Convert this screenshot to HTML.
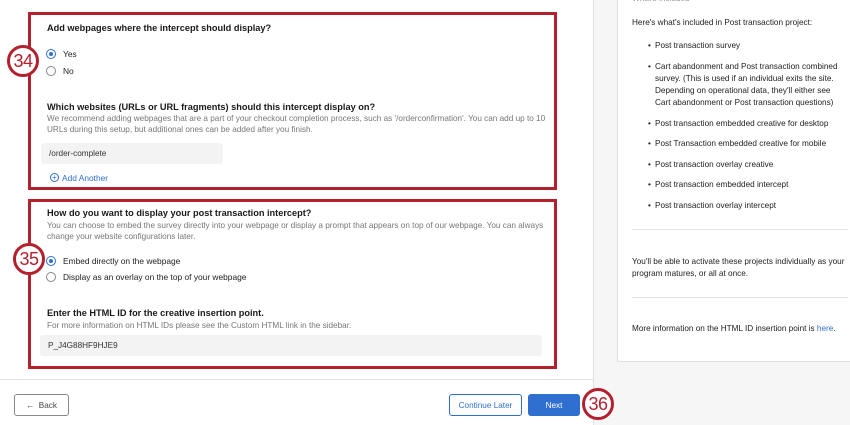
<!DOCTYPE html>
<html><head><style>
*{margin:0;padding:0;box-sizing:border-box}
body{width:850px;height:425px;overflow:hidden;background:#fff;font-family:"Liberation Sans",Arial,sans-serif;position:relative;color:#222}
.a{position:absolute;white-space:nowrap}
.h{font-size:9.2px;font-weight:bold;color:#1a1a1a}
.g{font-size:8.2px;color:#777}
.t{font-size:8.4px;color:#222}
.box{position:absolute;border:3px solid #b3212e}
.circ{position:absolute;width:32px;height:32px;border:3px solid #b3212e;border-radius:50%;background:#fff;color:#b3212e;font-size:18px;text-align:center;line-height:26px;letter-spacing:-0.5px}
.rad{position:absolute;width:10px;height:10px;border:1px solid #888;border-radius:50%;background:#fff}
.rad.on{border-color:#2f6fcf}
.rad.on:after{content:"";position:absolute;left:2px;top:2px;width:4px;height:4px;border-radius:50%;background:#2f6fcf}
.inp{position:absolute;background:#f3f3f3;border-radius:3px;font-size:8.2px;color:#333;padding-left:8px;line-height:21px}
.side{font-size:8.2px;color:#222}
.b{position:absolute;left:655px;font-size:8.2px;color:#222;line-height:12px;white-space:nowrap}
.b:before{content:"•";position:absolute;left:-7px}
.btn{position:absolute;height:22px;border-radius:3px;font-size:8.2px;display:flex;align-items:center;justify-content:center}
</style></head><body>
<div class="a" style="left:593px;top:0;width:257px;height:425px;background:#f6f6f6;border-left:1px solid #e2e2e2"></div>
<div class="a" style="left:617px;top:-5px;width:240px;height:367px;background:#fff;border:1px solid #e0e0e0"></div>
<div class="a side" style="left:632px;top:-6px;color:#999">What's included</div>
<div class="a side" style="left:632px;top:18px">Here's what's included in Post transaction project:</div>
<div class="b" style="top:40px">Post transaction survey</div>
<div class="b" style="top:61px">Cart abandonment and Post transaction combined<br>survey. (This is used if an individual exits the site.<br>Depending on operational data, they'll either see<br>Cart abandonment or Post transaction questions)</div>
<div class="b" style="top:118px">Post transaction embedded creative for desktop</div>
<div class="b" style="top:138px">Post Transaction embedded creative for mobile</div>
<div class="b" style="top:159px">Post transaction overlay creative</div>
<div class="b" style="top:179px">Post transaction embedded intercept</div>
<div class="b" style="top:200px">Post transaction overlay intercept</div>
<div class="a" style="left:632px;top:229px;width:216px;height:1px;background:#e3e3e3"></div>
<div class="a side" style="left:632px;top:256px;line-height:12px">You'll be able to activate these projects individually as your<br>program matures, or all at once.</div>
<div class="a" style="left:632px;top:297px;width:216px;height:1px;background:#e3e3e3"></div>
<div class="a side" style="left:632px;top:324px">More information on the HTML ID insertion point is <span style="color:#2f6fcf">here</span>.</div>

<div class="a" style="left:0;top:379px;width:593px;height:1px;background:#e3e3e3"></div>

<div class="box" style="left:28px;top:12px;width:529px;height:178px"></div>
<div class="a h" style="left:47px;top:23px">Add webpages where the intercept should display?</div>
<div class="rad on" style="left:46px;top:49px"></div><div class="a t" style="left:63px;top:49px">Yes</div>
<div class="rad" style="left:46px;top:66px"></div><div class="a t" style="left:63px;top:66px">No</div>
<div class="a h" style="left:47px;top:102px">Which websites (URLs or URL fragments) should this intercept display on?</div>
<div class="a g" style="left:47px;top:114px;line-height:10.5px">We recommend adding webpages that are a part of your checkout completion process, such as '/orderconfirmation'. You can add up to 10<br>URLs during this setup, but additional ones can be added after you finish.</div>
<div class="inp" style="left:41px;top:143px;width:182px;height:21px">/order-complete</div>
<div class="a" style="left:50px;top:173px;width:9px;height:9px;border:1px solid #2f6fcf;border-radius:50%;color:#2f6fcf;font-size:8px;line-height:7px;text-align:center">+</div>
<div class="a t" style="left:62px;top:173px;color:#2f6fcf">Add Another</div>
<div class="circ" style="left:7px;top:45px">34</div>

<div class="box" style="left:28px;top:199px;width:529px;height:170px"></div>
<div class="a h" style="left:47px;top:208px">How do you want to display your post transaction intercept?</div>
<div class="a g" style="left:47px;top:221px;line-height:10.5px">You can choose to embed the survey directly into your webpage or display a prompt that appears on top of our webpage. You can always<br>change your website configurations later.</div>
<div class="rad on" style="left:46px;top:256px"></div><div class="a t" style="left:63px;top:256px">Embed directly on the webpage</div>
<div class="rad" style="left:46px;top:272px"></div><div class="a t" style="left:63px;top:272px">Display as an overlay on the top of your webpage</div>
<div class="a h" style="left:47px;top:308px">Enter the HTML ID for the creative insertion point.</div>
<div class="a g" style="left:47px;top:321px">For more information on HTML IDs please see the Custom HTML link in the sidebar.</div>
<div class="inp" style="left:40px;top:335px;width:502px;height:21px">P_J4G88HF9HJE9</div>
<div class="circ" style="left:13px;top:243px">35</div>

<div class="btn" style="left:14px;top:394px;width:55px;border:1px solid #888;color:#444">&#8592;&nbsp;&nbsp;Back</div>
<div class="btn" style="left:449px;top:394px;width:73px;border:1px solid #2f6fcf;color:#2f6fcf">Continue Later</div>
<div class="btn" style="left:528px;top:394px;width:52px;background:#2f6fcf;color:#fff">Next</div>
<div class="circ" style="left:582px;top:388px">36</div>
</body></html>
